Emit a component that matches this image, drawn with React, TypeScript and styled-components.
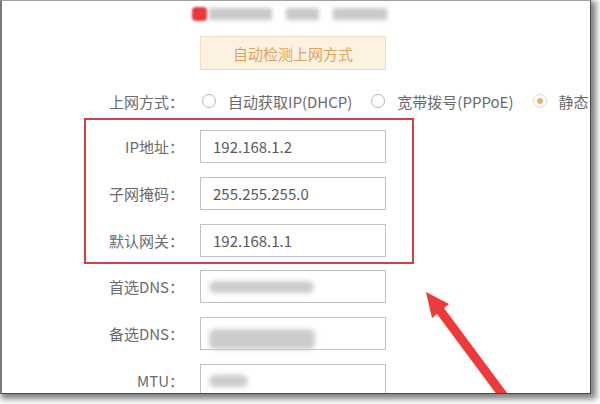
import * as React from "react";
import styled, { createGlobalStyle } from "styled-components";

const GlobalStyle = createGlobalStyle`
  html, body {
    margin: 0;
    padding: 0;
    background: #fff;
  }
  body {
    width: 600px;
    height: 404px;
    overflow: hidden;
    font-family: "Noto Sans CJK SC", "Noto Sans", sans-serif;
  }
`;

const rows = [
  { label: "IP地址：", value: "192.168.1.2" },
  { label: "子网掩码：", value: "255.255.255.0" },
  { label: "默认网关：", value: "192.168.1.1" },
];

const hidden = [
  { label: "首选DNS：", blur: 105, tall: false },
  { label: "备选DNS：", blur: 106, tall: true },
  { label: "MTU：", blur: 39, tall: false },
];

const modes = [
  { text: "自动获取IP(DHCP)", on: false },
  { text: "宽带拨号(PPPoE)", on: false },
  { text: "静态", on: true },
];

const App = () => {
  return (
    <>
      <GlobalStyle />
      <Screen>
        <TopBar>
          <RedDot />
          <GreyBlock $w={63} />
          <GreyBlock $w={33} />
          <GreyBlock $w={54} />
        </TopBar>
        <DetectButton>自动检测上网方式</DetectButton>
        <Form>
          <ModeRow>
            <Label>上网方式：</Label>
            <Options>
              {modes.map((m) => (
                <Option key={m.text}>
                  <Radio $on={m.on} />
                  {m.text}
                </Option>
              ))}
            </Options>
          </ModeRow>
          <Highlight>
            {rows.map((r) => (
              <FieldRow key={r.label}>
                <Label>{r.label}</Label>
                <Input>{r.value}</Input>
              </FieldRow>
            ))}
          </Highlight>
          <Rest>
            {hidden.map((r) => (
              <FieldRow key={r.label}>
                <Label>{r.label}</Label>
                <Input>
                  <Smudge $w={r.blur} $tall={r.tall} />
                </Input>
              </FieldRow>
            ))}
          </Rest>
        </Form>
        <Arrow viewBox="0 0 590 393" width="590" height="393">
          <polygon
            points="426,292 432,318 437,314 506,407 513,401 444,308 449,304"
            fill="#ee3a3a"
          />
        </Arrow>
      </Screen>
    </>
  );
};

const Screen = styled.div`
  position: relative;
  box-sizing: border-box;
  width: 591px;
  height: 394px;
  border-left: 2px solid #7a7a7a;
  border-top: 1px solid #a0a0a0;
  border-right: 1px solid #4a4a4a;
  border-bottom: 1px solid #4a4a4a;
  box-shadow: 3px 3px 6px 2px rgba(0, 0, 0, 0.5);
  overflow: hidden;
  background: #fff;
`;

const TopBar = styled.div`
  display: flex;
  align-items: center;
  gap: 14px;
  height: 14px;
  margin-top: 6px;
  padding-left: 190px;
`;

const RedDot = styled.div`
  width: 15px;
  height: 14px;
  border-radius: 4px;
  background: #e8383b;
  filter: blur(1px);
  margin-right: -12px;
`;

const GreyBlock = styled.div<{ $w: number }>`
  width: ${(p) => p.$w}px;
  height: 12px;
  background: #c9c9c9;
  filter: blur(2px);
`;

const DetectButton = styled.div`
  box-sizing: border-box;
  width: 186px;
  height: 34px;
  margin: 15px 0 0 198px;
  display: flex;
  align-items: center;
  justify-content: center;
  background: #fdf1e2;
  border: 1px solid #f5dcbd;
  color: #e3a25a;
  font-size: 15px;
`;

const Form = styled.div`
  margin-left: 82px;
`;

const ModeRow = styled.div`
  display: flex;
  align-items: center;
  height: 20px;
  margin-top: 21px;
  padding-left: 2px;
`;

const Options = styled.div`
  display: flex;
  align-items: center;
  margin-left: 18px;
  white-space: nowrap;
`;

const Option = styled.div`
  display: flex;
  align-items: center;
  margin-right: 19px;
  font-size: 15px;
  color: #6b6b6b;
`;

const Radio = styled.span<{ $on: boolean }>`
  box-sizing: border-box;
  width: 14px;
  height: 14px;
  margin-right: 12px;
  border-radius: 50%;
  border: 1px solid ${(p) => (p.$on ? "#e8d6bd" : "#b8b8b8")};
  display: flex;
  align-items: center;
  justify-content: center;
  &::after {
    content: "";
    display: ${(p) => (p.$on ? "block" : "none")};
    width: 6px;
    height: 6px;
    border-radius: 50%;
    background: #e2b46c;
  }
`;

const Highlight = styled.div`
  box-sizing: border-box;
  width: 330px;
  margin-top: 7px;
  padding: 10px 0 5px;
  border: 2px solid #d43f3f;
  display: flex;
  flex-direction: column;
  gap: 14px;
`;

const Rest = styled.div`
  display: flex;
  flex-direction: column;
  gap: 14px;
  margin-top: 6px;
  padding-left: 2px;
`;

const FieldRow = styled.div`
  display: flex;
  align-items: center;
  gap: 16px;
  height: 33px;
`;

const Label = styled.div`
  width: 98px;
  flex-shrink: 0;
  text-align: right;
  font-size: 15px;
  color: #6b6b6b;
  white-space: nowrap;
`;

const Input = styled.div`
  box-sizing: border-box;
  width: 186px;
  height: 33px;
  padding-left: 12px;
  border: 1px solid #c2c2c2;
  display: flex;
  align-items: center;
  font-size: 15px;
  color: #5a5a5a;
`;

const Smudge = styled.span<{ $w: number; $tall: boolean }>`
  display: block;
  width: ${(p) => p.$w}px;
  height: ${(p) => (p.$tall ? 20 : 12)}px;
  margin-left: -4px;
  margin-top: ${(p) => (p.$tall ? 10 : 0)}px;
  border-radius: 6px;
  background: #cbcbcb;
  filter: blur(2.5px);
`;

const Arrow = styled.svg`
  position: absolute;
  left: -2px;
  top: -1px;
  pointer-events: none;
`;

export default App;
